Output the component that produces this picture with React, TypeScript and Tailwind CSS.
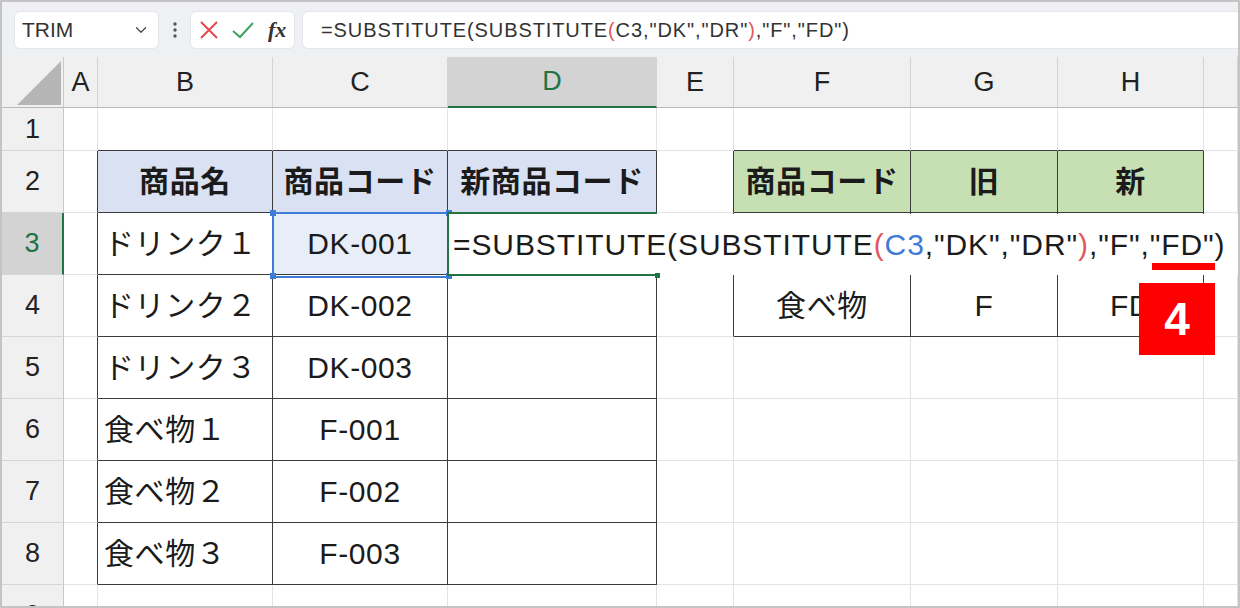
import { ChevronDown } from 'lucide-react';

type CellDef = { text: string; align?: 'left' | 'center'; kind?: 'blue' | 'green' | 'sel' };

const COL_LABELS = ['A', 'B', 'C', 'D', 'E', 'F', 'G', 'H', ''];

// row number -> column index (A=0) -> cell
const DATA: Record<number, Record<number, CellDef>> = {
  2: {
    1: { text: '商品名', kind: 'blue' },
    2: { text: '商品コード', kind: 'blue' },
    3: { text: '新商品コード', kind: 'blue' },
    5: { text: '商品コード', kind: 'green' },
    6: { text: '旧', kind: 'green' },
    7: { text: '新', kind: 'green' },
  },
  3: { 1: { text: 'ドリンク１', align: 'left' }, 2: { text: 'DK-001', kind: 'sel' } },
  4: {
    1: { text: 'ドリンク２', align: 'left' },
    2: { text: 'DK-002' },
    5: { text: '食べ物' },
    6: { text: 'F' },
    7: { text: 'FD' },
  },
  5: { 1: { text: 'ドリンク３', align: 'left' }, 2: { text: 'DK-003' } },
  6: { 1: { text: '食べ物１', align: 'left' }, 2: { text: 'F-001' } },
  7: { 1: { text: '食べ物２', align: 'left' }, 2: { text: 'F-002' } },
  8: { 1: { text: '食べ物３', align: 'left' }, 2: { text: 'F-003' } },
};

function inTable(row: number, col: number) {
  if (row >= 2 && row <= 8 && col >= 1 && col <= 3) return true;
  if (row >= 2 && row <= 4 && col >= 5 && col <= 7) return true;
  return false;
}

const ROWS = [1, 2, 3, 4, 5, 6, 7, 8, 9];

function Cell({ row, col }: { row: number; col: number }) {
  const def = DATA[row]?.[col];
  const rightDark = inTable(row, col) || inTable(row, col + 1);
  const bottomDark = inTable(row, col) || inTable(row + 1, col);
  const bg =
    def?.kind === 'blue'
      ? 'bg-[#d9e1f2] font-bold'
      : def?.kind === 'green'
        ? 'bg-[#c6e0b4] font-bold'
        : def?.kind === 'sel'
          ? 'bg-[#e8eef8]'
          : 'bg-white';
  return (
    <div
      className={`flex items-center overflow-hidden whitespace-nowrap border-r border-b text-[30px] text-[#1b1b1b] tracking-[0.6px] ${
        rightDark ? 'border-r-[#3c3c3c]' : 'border-r-[#e3e3e3]'
      } ${bottomDark ? 'border-b-[#3c3c3c]' : 'border-b-[#e3e3e3]'} ${bg} ${
        def?.align === 'left' ? 'justify-start pl-[6px]' : 'justify-center'
      }`}
    >
      {def?.text}
    </div>
  );
}

function Toolbar() {
  return (
    <div className="flex h-[55px] items-center bg-[#eef0f4] pl-[12px]">
      <div className="flex h-[38px] w-[145px] items-center justify-between rounded-[6px] border border-[#e4e6ea] bg-white pl-[7px] pr-[8px]">
        <span className="text-[21px] text-[#333]">TRIM</span>
        <ChevronDown size={18} strokeWidth={1.6} className="text-[#444]" />
      </div>
      <div className="flex w-[31px] justify-center">
        <svg width="4" height="16" viewBox="0 0 4 16">
          <circle cx="2" cy="2" r="1.7" fill="#555" />
          <circle cx="2" cy="8" r="1.7" fill="#555" />
          <circle cx="2" cy="14" r="1.7" fill="#555" />
        </svg>
      </div>
      <div className="flex h-[38px] w-[105px] items-center rounded-[6px] border border-[#e4e6ea] bg-white pl-[8px]">
        <svg width="20" height="20" viewBox="0 0 20 20">
          <path d="M2 2 L18 18 M18 2 L2 18" stroke="#e5484d" strokeWidth="2" fill="none" />
        </svg>
        <svg width="24" height="20" viewBox="0 0 24 20" className="ml-[12px]">
          <path d="M2 11 L9 17 L22 3" stroke="#3da35d" strokeWidth="2" fill="none" />
        </svg>
        <span className="ml-[13px] font-['Liberation_Serif',serif] text-[22px] font-bold italic text-[#333]">fx</span>
      </div>
      <div className="ml-[7px] flex h-[38px] flex-1 items-center rounded-l-[6px] border border-r-0 border-[#e4e6ea] bg-white pl-[18px]">
        <span className="whitespace-nowrap text-[20px] tracking-[0.9px] text-[#333]">
          =SUBSTITUTE(SUBSTITUTE<span className="text-[#e0595e]">(</span>C3,"DK","DR"
          <span className="text-[#e0595e]">)</span>,"F","FD")
        </span>
      </div>
    </div>
  );
}

export default function App() {
  return (
    <div className="h-[608px] w-[1240px] overflow-hidden border-2 border-[#c4c4c4] bg-white font-['Liberation_Sans','Noto_Sans_CJK_JP',sans-serif]">
      <div className="relative h-full w-full">
        <Toolbar />
        <div className="grid grid-cols-[62px_34px_175px_175px_209px_77px_177px_147px_146px_1fr] grid-rows-[51px_43px_62px_62px_62px_62px_62px_62px_62px_62px]">
          {/* column headers */}
          <div className="relative border-r border-b border-r-[#c8c8c8] border-b-[#b8b8b8] bg-[#f0f0f0]">
            <svg className="absolute bottom-[2px] right-[2px]" width="44" height="44" viewBox="0 0 44 44">
              <path d="M44 0 L44 44 L0 44 Z" fill="#b5b5b5" />
            </svg>
          </div>
          {COL_LABELS.map((label, i) => (
            <div
              key={`h${i}`}
              className={`flex items-center justify-center border-r border-r-[#d3d3d3] text-[27px] ${
                label === 'D'
                  ? 'border-b-2 border-b-[#217346] bg-[#d3d3d3] text-[#217346]'
                  : 'border-b border-b-[#b8b8b8] bg-[#f0f0f0] text-[#222]'
              }`}
            >
              {label}
            </div>
          ))}
          {ROWS.map((row) => [
            <div
              key={`r${row}`}
              className={`flex items-center justify-center border-b border-b-[#d6d6d6] text-[27px] ${
                row === 3
                  ? 'border-r-2 border-r-[#217346] bg-[#d3d3d3] text-[#217346]'
                  : 'border-r border-r-[#c8c8c8] bg-[#f0f0f0] text-[#222]'
              }`}
            >
              {row}
            </div>,
            ...COL_LABELS.map((_, col) => <Cell key={`c${row}-${col}`} row={row} col={col} />),
          ])}
        </div>

        {/* C3 reference highlight */}
        <div className="absolute left-[270px] top-[210px] h-[66px] w-[178px] border-2 border-[#3f7bd9]" />
        <div className="absolute left-[268px] top-[208px] h-[6px] w-[6px] bg-[#3f7bd9]" />
        <div className="absolute left-[444px] top-[208px] h-[6px] w-[6px] bg-[#3f7bd9]" />
        <div className="absolute left-[268px] top-[271px] h-[6px] w-[6px] bg-[#3f7bd9]" />
        <div className="absolute left-[444px] top-[271px] h-[6px] w-[6px] bg-[#3f7bd9]" />

        {/* D3 in-cell editor */}
        <div className="absolute left-[447px] right-0 top-[212px] flex h-[61px] items-center bg-white pl-[4px]">
          <span className="whitespace-nowrap text-[30px] tracking-[0.9px] text-[#1b1b1b]">
            =SUBSTITUTE(SUBSTITUTE<span className="text-[#e0595e]">(</span>
            <span className="text-[#3f7bd9]">C3</span>,"DK","DR"<span className="text-[#e0595e]">)</span>,"F","FD")
          </span>
        </div>
        <div className="absolute left-[445px] top-[210px] h-[2px] w-[210px] bg-[#217346]" />
        <div className="absolute left-[445px] top-[272px] h-[2px] w-[210px] bg-[#217346]" />
        <div className="absolute left-[445px] top-[210px] h-[64px] w-[2px] bg-[#217346]" />
        <div className="absolute left-[653px] top-[271px] h-[5px] w-[5px] bg-[#217346]" />

        {/* annotation */}
        <div className="absolute left-[1150px] top-[261px] h-[7px] w-[63px] bg-[#ff0000]" />
        <div className="absolute left-[1137px] top-[281px] flex h-[72px] w-[76px] items-center justify-center bg-[#ff0000] text-[46px] font-bold text-white">
          4
        </div>
      </div>
    </div>
  );
}
